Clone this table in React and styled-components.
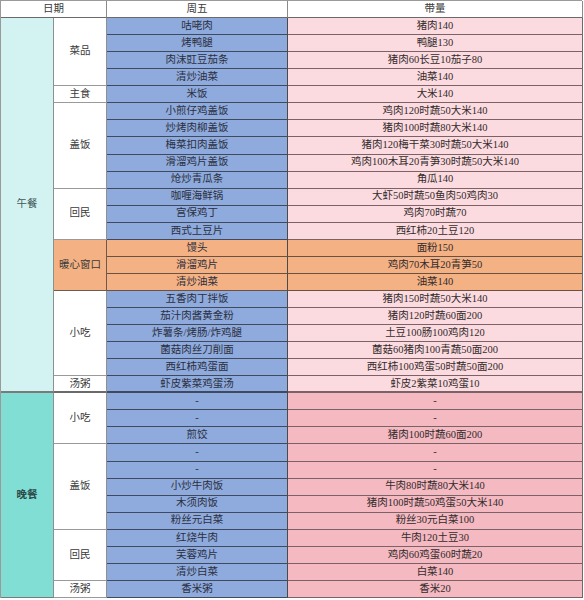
import React from "react";
import styled, { createGlobalStyle } from "styled-components";

const GlobalStyle = createGlobalStyle`
  html, body {
    margin: 0;
    padding: 0;
    background: #ffffff;
  }
  * {
    box-sizing: border-box;
  }
`;

const lunch = [
  {
    cat: "菜品",
    items: [
      ["咕咾肉", "猪肉140"],
      ["烤鸭腿", "鸭腿130"],
      ["肉沫豇豆茄条", "猪肉60长豆10茄子80"],
      ["清炒油菜", "油菜140"],
    ],
  },
  { cat: "主食", items: [["米饭", "大米140"]] },
  {
    cat: "盖饭",
    items: [
      ["小煎仔鸡盖饭", "鸡肉120时蔬50大米140"],
      ["炒烤肉柳盖饭", "猪肉100时蔬80大米140"],
      ["梅菜扣肉盖饭", "猪肉120梅干菜30时蔬50大米140"],
      ["滑溜鸡片盖饭", "鸡肉100木耳20青笋30时蔬50大米140"],
      ["炝炒青瓜条", "角瓜140"],
    ],
  },
  {
    cat: "回民",
    items: [
      ["咖喱海鲜锅", "大虾50时蔬50鱼肉50鸡肉30"],
      ["宫保鸡丁", "鸡肉70时蔬70"],
      ["西式土豆片", "西红柿20土豆120"],
    ],
  },
  {
    cat: "暖心窗口",
    warm: true,
    items: [
      ["馒头", "面粉150"],
      ["滑溜鸡片", "鸡肉70木耳20青笋50"],
      ["清炒油菜", "油菜140"],
    ],
  },
  {
    cat: "小吃",
    items: [
      ["五香肉丁拌饭", "猪肉150时蔬50大米140"],
      ["茄汁肉酱黄金粉", "猪肉120时蔬60面200"],
      ["炸薯条/烤肠/炸鸡腿", "土豆100肠100鸡肉120"],
      ["菌菇肉丝刀削面", "菌菇60猪肉100青蔬50面200"],
      ["西红柿鸡蛋面", "西红柿100鸡蛋50时蔬50面200"],
    ],
  },
  { cat: "汤粥", items: [["虾皮紫菜鸡蛋汤", "虾皮2紫菜10鸡蛋10"]] },
];

const dinner = [
  {
    cat: "小吃",
    items: [
      ["-", "-"],
      ["-", "-"],
      ["煎饺", "猪肉100时蔬60面200"],
    ],
  },
  {
    cat: "盖饭",
    items: [
      ["-", "-"],
      ["-", "-"],
      ["小炒牛肉饭", "牛肉80时蔬80大米140"],
      ["木须肉饭", "猪肉100时蔬50鸡蛋50大米140"],
      ["粉丝元白菜", "粉丝30元白菜100"],
    ],
  },
  {
    cat: "回民",
    items: [
      ["红烧牛肉", "牛肉120土豆30"],
      ["芙蓉鸡片", "鸡肉60鸡蛋60时蔬20"],
      ["清炒白菜", "白菜140"],
    ],
  },
  { cat: "汤粥", items: [["香米粥", "香米20"]] },
];

const meals = [
  { name: "午餐", kind: "lunch", groups: lunch },
  { name: "晚餐", kind: "dinner", groups: dinner },
];

const Sheet = styled.div`
  display: grid;
  grid-template-columns: 53px 53px 181px 295px;
  grid-template-rows: repeat(35, 1fr);
  width: 582px;
  height: 598px;
  border-top: 1px solid #9a9a9a;
  border-left: 1px solid #9a9a9a;
  font-family: "Liberation Serif", "Noto Sans CJK SC", serif;
  font-size: 10.5px;
  color: #2f2f2f;
`;

const Cell = styled.div`
  display: flex;
  align-items: center;
  justify-content: center;
  grid-row: ${(p) => p.$row} / span ${(p) => p.$span || 1};
  grid-column: ${(p) => p.$col} / span ${(p) => p.$colSpan || 1};
  border-right: 1px solid #5c5c5c;
  border-bottom: ${(p) => (p.$end ? "2px solid #6a6a6a" : "1px solid #5c5c5c")};
  white-space: nowrap;
  line-height: 1;
`;

const HeadCell = styled(Cell)`
  background: #ffffff;
  border-right-color: #8a8a8a;
  border-bottom-color: #6a6a6a;
  color: #3a3a3a;
`;

const MealCell = styled(Cell)`
  background: ${(p) => (p.$kind === "dinner" ? "#80ded5" : "#d3f3f2")};
  border-right-color: #8f8f8f;
  border-bottom-color: #7a7a7a;
  color: ${(p) => (p.$kind === "dinner" ? "#2c4a47" : "#3f5a58")};
  font-weight: ${(p) => (p.$kind === "dinner" ? 700 : 400)};
`;

const CatCell = styled(Cell)`
  background: ${(p) => (p.$warm ? "#f4b183" : "#ffffff")};
  border-right-color: ${(p) => (p.$warm ? "#6b5a4e" : "#8f8f8f")};
  border-bottom-color: ${(p) => (p.$end ? "#6a6a6a" : p.$warm ? "#6b5a4e" : "#9a9a9a")};
  color: #3a3a3a;
`;

const DishCell = styled(Cell)`
  background: ${(p) => (p.$warm ? "#f4b183" : "#8faadc")};
  border-bottom-color: ${(p) => (p.$warm ? "#6b5140" : "#3f4a5e")};
  border-right-color: #4a4a4a;
  color: #2a2f40;
`;

const AmountCell = styled(Cell)`
  background: ${(p) =>
    p.$warm ? "#f4b183" : p.$kind === "dinner" ? "#f4b9c1" : "#fcdbe0"};
  border-bottom-color: ${(p) => (p.$warm ? "#6b5140" : "#7a6266")};
  border-right-color: #6a6a6a;
  color: #332b2c;
`;

function buildCells() {
  const cells = [];
  let row = 2;
  meals.forEach((meal) => {
    const total = meal.groups.reduce((n, g) => n + g.items.length, 0);
    const mealEnd = meal.kind === "lunch";
    cells.push(
      <MealCell key={meal.name} $row={row} $span={total} $col={1} $kind={meal.kind} $end={mealEnd}>
        {meal.name}
      </MealCell>
    );
    meal.groups.forEach((group, gi) => {
      const lastGroup = gi === meal.groups.length - 1;
      cells.push(
        <CatCell
          key={`${meal.name}-${group.cat}`}
          $row={row}
          $span={group.items.length}
          $col={2}
          $warm={group.warm}
          $end={mealEnd && lastGroup}
        >
          {group.cat}
        </CatCell>
      );
      group.items.forEach(([dish, amount], ii) => {
        const end = mealEnd && lastGroup && ii === group.items.length - 1;
        cells.push(
          <DishCell key={`d-${row}`} $row={row} $col={3} $warm={group.warm} $end={end}>
            {dish}
          </DishCell>,
          <AmountCell
            key={`a-${row}`}
            $row={row}
            $col={4}
            $warm={group.warm}
            $kind={meal.kind}
            $end={end}
          >
            {amount}
          </AmountCell>
        );
        row += 1;
      });
    });
  });
  return cells;
}

export default function App() {
  return (
    <>
      <GlobalStyle />
      <Sheet>
        <HeadCell $row={1} $col={1} $colSpan={2}>
          日期
        </HeadCell>
        <HeadCell $row={1} $col={3}>
          周五
        </HeadCell>
        <HeadCell $row={1} $col={4}>
          带量
        </HeadCell>
        {buildCells()}
      </Sheet>
    </>
  );
}
